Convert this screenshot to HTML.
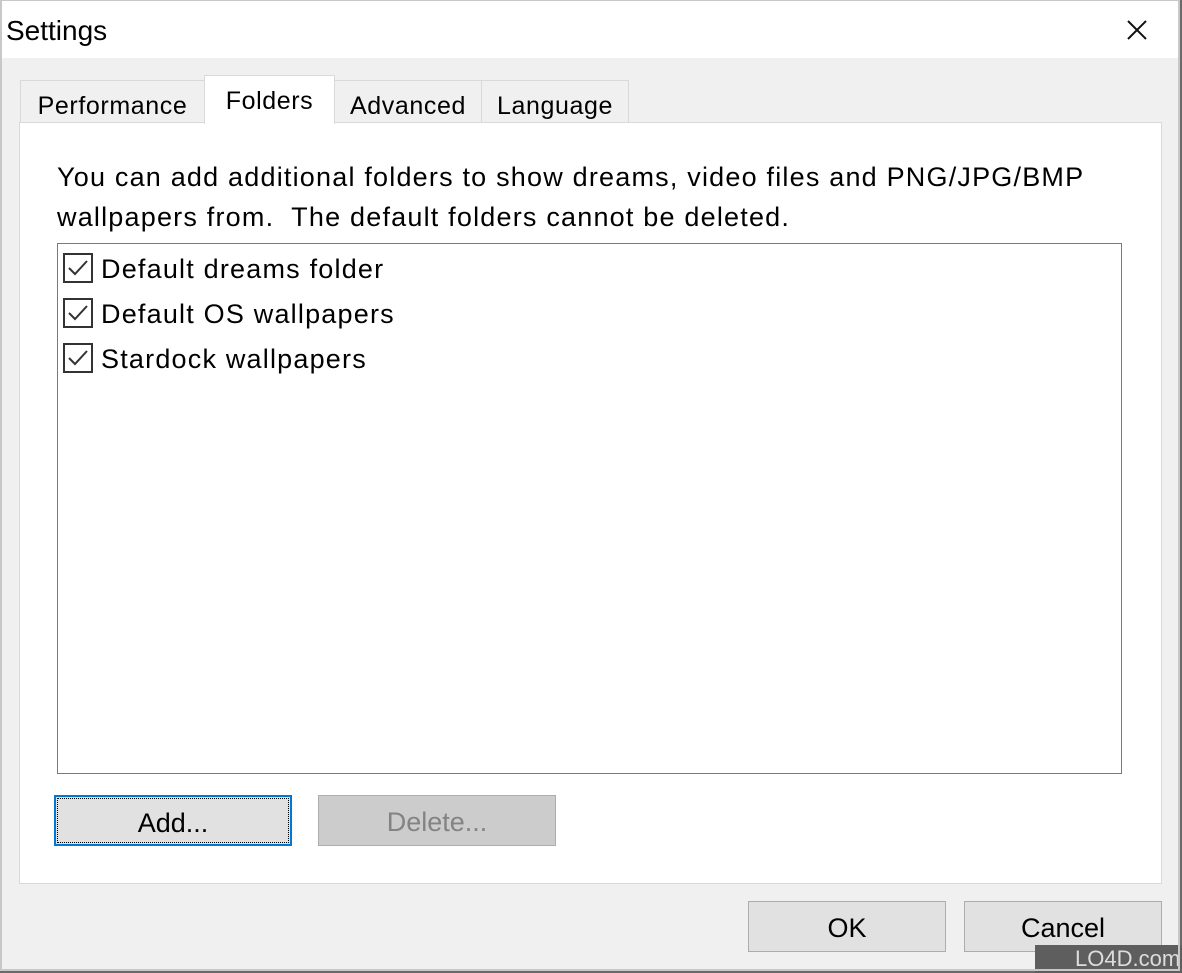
<!DOCTYPE html>
<html><head><meta charset="utf-8"><style>
*{margin:0;padding:0;box-sizing:border-box}
body{width:1182px;height:973px;background:#6a6a6a;position:relative;overflow:hidden;font-family:"Liberation Sans",sans-serif;color:#000}
.win{position:absolute;left:0;top:0;width:1180px;height:971px;background:#f0f0f0}
.wb{position:absolute;left:0;top:0;width:1180px;height:971px;border:2px solid #c8c8c8;border-top:1px solid #c8c8c8;pointer-events:none}
.title{position:absolute;left:0;top:0;width:100%;height:58px;background:#fff}
.abs{position:absolute;white-space:nowrap}
.tab{position:absolute;background:#f0f0f0;border:1px solid #d9d9d9;border-bottom:none;font-size:25px;letter-spacing:0.6px;text-align:center}
.panel{position:absolute;left:19px;top:122px;width:1143px;height:762px;background:#fff;border:1px solid #d9d9d9}
.list{position:absolute;left:57px;top:243px;width:1065px;height:531px;border:1px solid #7a7a7a;background:#fff}
.cb{position:absolute;left:5px;width:30px;height:30px;border:2px solid #333;background:#fff}
.item{position:absolute;left:43px;font-size:27px;letter-spacing:1.2px}
.btn{position:absolute;height:51px;font-size:27px;text-align:center;line-height:52px}
</style></head><body>
<div class="win">
<div class="title"></div>
<div class="abs" style="left:6px;top:15px;font-size:28px">Settings</div>
<svg class="abs" style="left:1127px;top:20px" width="20" height="20"><path d="M1 1L19 19M19 1L1 19" stroke="#111" stroke-width="2"/></svg>
<div class="tab" style="left:20px;top:80px;width:185px;height:43px;line-height:50px">Performance</div>
<div class="tab" style="left:334px;top:80px;width:148px;height:43px;line-height:50px">Advanced</div>
<div class="tab" style="left:481px;top:80px;width:148px;height:43px;line-height:50px">Language</div>
<div class="panel"></div>
<div class="tab" style="left:204px;top:75px;width:131px;height:49px;background:#fff;line-height:50px">Folders</div>
<div class="abs" style="left:57px;top:157px;font-size:27px;line-height:40px;letter-spacing:1.2px">You can add additional folders to show dreams, video files and PNG/JPG/BMP<br>wallpapers from.&nbsp; The default folders cannot be deleted.</div>
<div class="list">
 <div class="cb" style="top:9px"><svg width="26" height="26"><path d="M4 13L10 19L22 6" stroke="#333" stroke-width="2" fill="none"/></svg></div>
 <div class="item" style="top:10px">Default dreams folder</div>
 <div class="cb" style="top:54px"><svg width="26" height="26"><path d="M4 13L10 19L22 6" stroke="#333" stroke-width="2" fill="none"/></svg></div>
 <div class="item" style="top:55px">Default OS wallpapers</div>
 <div class="cb" style="top:99px"><svg width="26" height="26"><path d="M4 13L10 19L22 6" stroke="#333" stroke-width="2" fill="none"/></svg></div>
 <div class="item" style="top:100px">Stardock wallpapers</div>
</div>
<div class="btn" style="left:54px;top:795px;width:238px;background:#e1e1e1;border:2px solid #0078d7;outline:1px dotted #000;outline-offset:-4px">Add...</div>
<div class="btn" style="left:318px;top:795px;width:238px;background:#cccccc;border:1px solid #adadad;color:#838383">Delete...</div>
<div class="btn" style="left:748px;top:901px;width:198px;background:#e1e1e1;border:1px solid #adadad">OK</div>
<div class="btn" style="left:964px;top:901px;width:198px;background:#e1e1e1;border:1px solid #adadad">Cancel</div>
<div class="abs" style="left:1035px;top:945px;width:147px;height:28px;background:#5e5e5e;color:#ddd;font-size:22px;line-height:28px;padding-left:40px">LO4D.com</div>
<div class="wb"></div>
</div>
</body></html>
